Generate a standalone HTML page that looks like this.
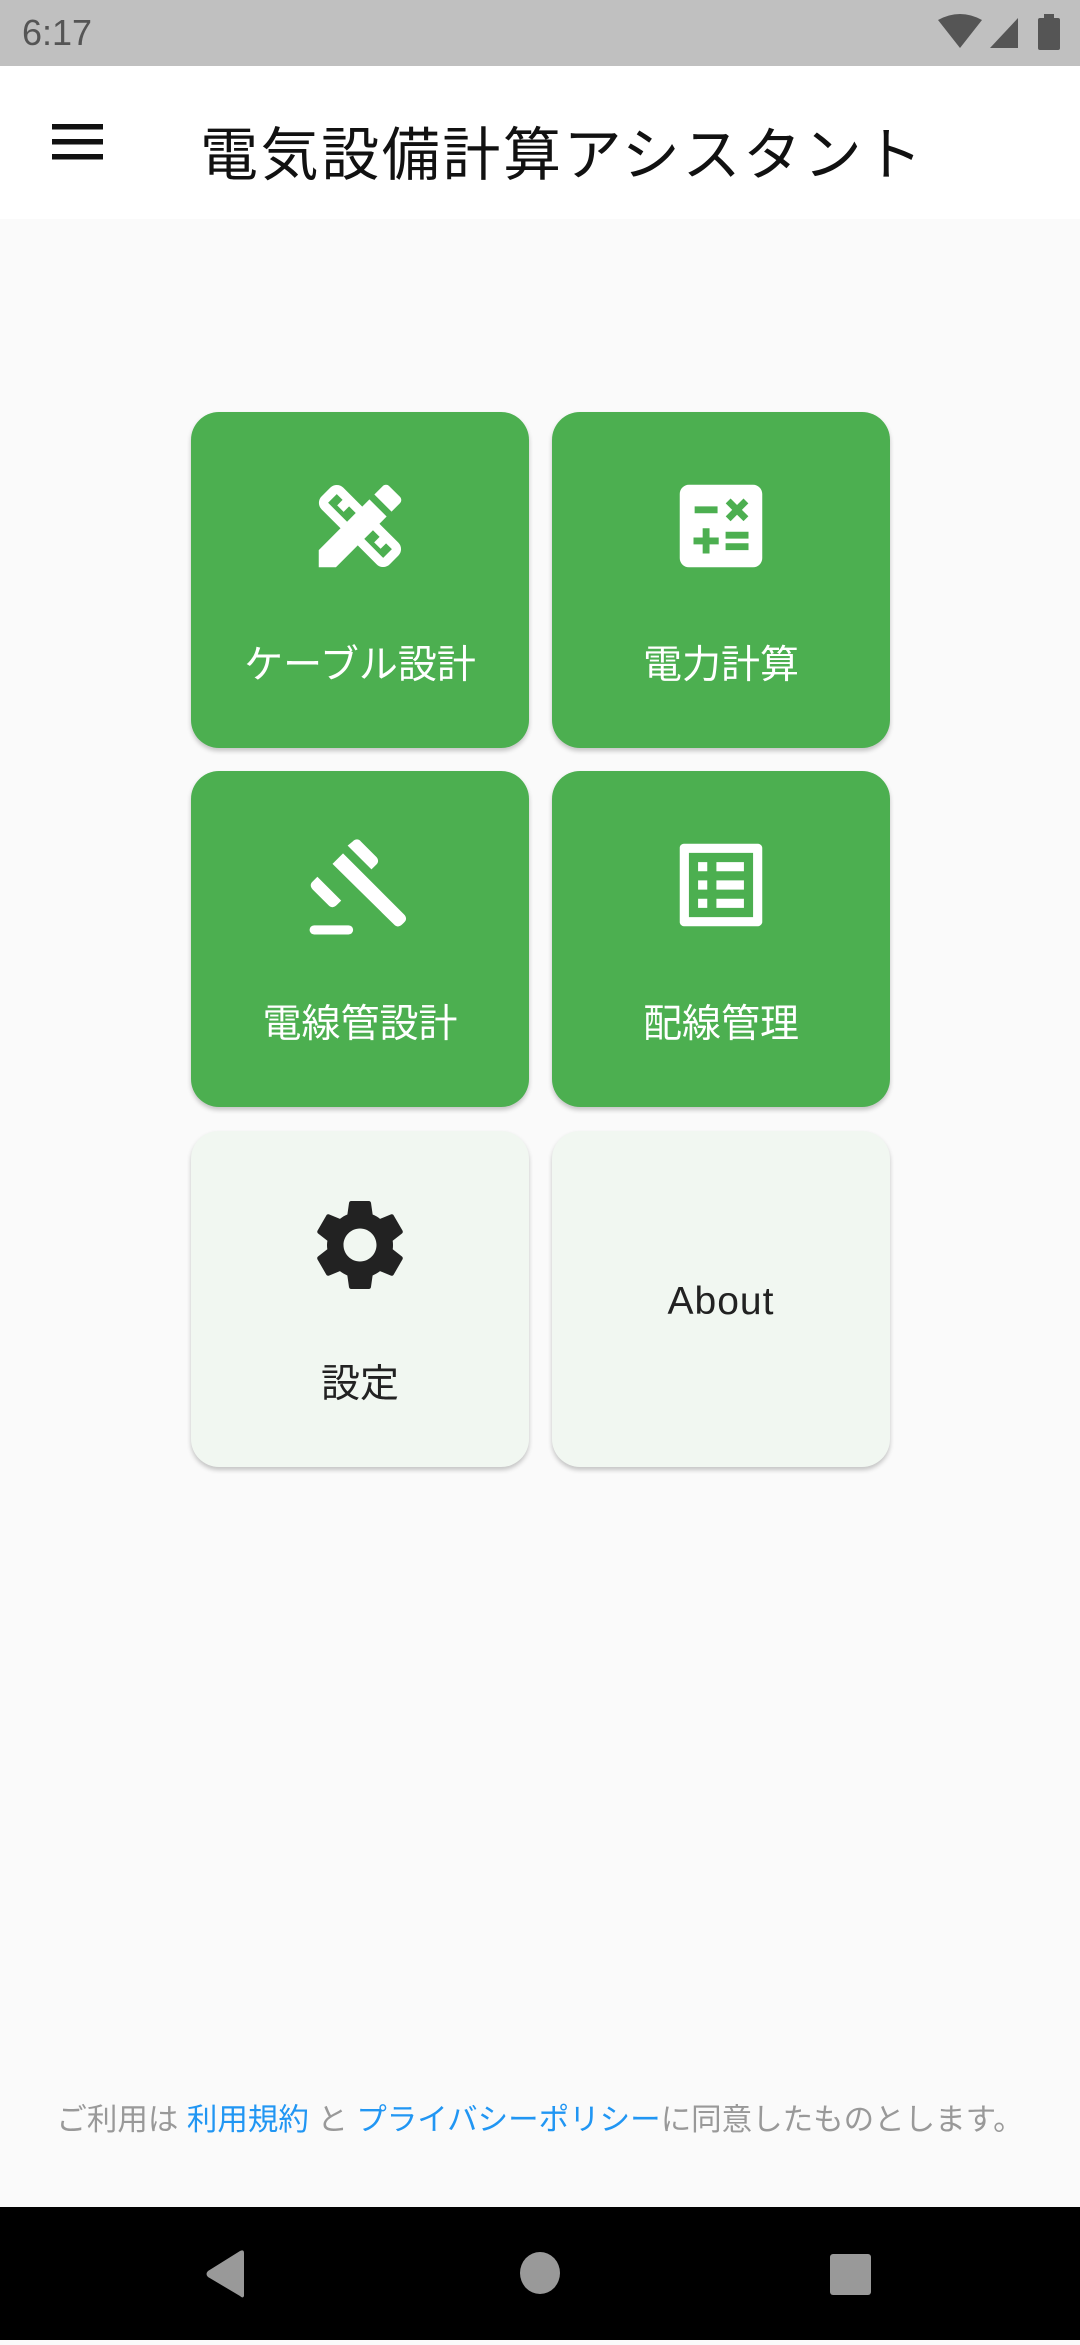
<!DOCTYPE html>
<html><head><meta charset="utf-8"><style>
*{margin:0;padding:0;box-sizing:border-box}
body{width:1080px;height:2340px;background:#fafafa;position:relative;overflow:hidden;font-family:"Liberation Sans","Noto Sans CJK JP",sans-serif}
.status{position:absolute;top:0;left:0;width:1080px;height:66px;background:#c0c0c0}
.status .t{position:absolute;left:22px;top:12px;font-size:36px;color:#555}
.appbar{position:absolute;top:66px;left:0;width:1080px;height:153px;background:#fff}
.title{position:absolute;left:200px;top:42px;font-size:58px;color:#111;letter-spacing:2.6px;white-space:nowrap}
.card{position:absolute;width:338px;height:336px;border-radius:28px;background:#4caf50;box-shadow:0 3px 5px rgba(0,0,0,.22)}
.card.l{background:#f1f7f1}
.card svg{position:absolute;left:114px;top:59px;width:110px;height:110px}
.card .lb{position:absolute;left:0;width:100%;text-align:center;top:229px;font-size:39px;color:#fff;line-height:50px}
.card.l .lb{color:#222}
.foot{position:absolute;top:2095px;left:0;width:1080px;text-align:center;font-size:30.5px;color:#999;white-space:nowrap}
.foot span{color:#2196f3}
.nav{position:absolute;top:2207px;left:0;width:1080px;height:133px;background:#000}
</style></head><body>
<div class="status"><div class="t">6:17</div>
<svg style="position:absolute;left:938px;top:14px" width="124" height="38" viewBox="0 0 124 38">
<path d="M0 6 Q22 -6 44 6 L22 34 Z" fill="#555"/>
<path d="M52 34 L80 4 L80 34 Z" fill="#555"/>
<rect x="100" y="4" width="22" height="32" rx="2" fill="#555"/><rect x="106" y="0" width="10" height="5" fill="#555"/>
</svg></div>
<div class="appbar">
<svg style="position:absolute;left:52px;top:58px" width="51" height="36" viewBox="0 0 51 36"><rect y="0" width="51" height="5.5" fill="#111"/><rect y="15" width="51" height="5.5" fill="#111"/><rect y="30" width="51" height="5.5" fill="#111"/></svg>
<div class="title">電気設備計算アシスタント</div></div>

<div class="card" style="left:191px;top:412px"><svg viewBox="0 0 24 24"><path fill="#fff" d="M16.24 11.51l1.57-1.57-3.75-3.75-1.57 1.57-4.14-4.13c-.78-.78-2.05-.78-2.83 0l-1.9 1.9c-.78.78-.78 2.05 0 2.830l4.13 4.13L3 17.25V21h3.750l4.76-4.76 4.13 4.13c.95.95 2.23.6 2.830 0l1.900-1.9c.78-.78.78-2.05 0-2.83l-4.13-4.13zm-7.06-.44L5.04 6.940l1.89-1.9L8.2 6.31 7.02 7.5l1.41 1.41 1.19-1.19 1.45 1.45-1.89 1.9zm7.88 7.89l-4.13-4.14 1.9-1.9 1.45 1.45-1.19 1.19 1.41 1.41 1.19-1.19 1.27 1.27-1.9 1.91zM20.71 7.04c.39-.39.39-1.020 0-1.41l-2.34-2.34c-.47-.47-1.12-.29-1.41 0l-1.83 1.83 3.75 3.75 1.83-1.83z"/></svg><div class="lb">ケーブル設計</div></div>
<div class="card" style="left:552px;top:412px"><svg viewBox="0 0 24 24"><path fill="#fff" d="M19 3H5c-1.1 0-2 .9-2 2v14c0 1.1.9 2 2 2h14c1.1 0 2-.9 2-2V5c0-1.1-.9-2-2-2zm-5.97 4.06L14.09 6l1.41 1.41L16.91 6l1.06 1.06-1.41 1.41 1.41 1.41-1.06 1.06-1.41-1.4-1.41 1.41-1.06-1.06 1.41-1.41-1.41-1.42zm-6.78.66h5v1.5h-5v-1.5zM11.5 16h-2v2H8v-2H6v-1.5h2v-2h1.5v2h2V16zm6.5 1.25h-5v-1.5h5v1.5zm0-2.5h-5v-1.5h5v1.5z"/></svg><div class="lb">電力計算</div></div>
<div class="card" style="left:552px;top:771px"><svg viewBox="0 0 24 24"><path fill="#fff" d="M19 5v14H5V5h14m1.1-2H3.9c-.5 0-.9.4-.9.9v16.2c0 .4.4.9.9.9h16.2c.4 0 .9-.5.9-.9V3.9c0-.5-.5-.9-.9-.9zM11 7h6v2h-6V7zm0 4h6v2h-6v-2zm0 4h6v2h-6zM7 7h2v2H7zm0 4h2v2H7zm0 4h2v2H7z"/></svg><div class="lb">配線管理</div></div>
<div class="card" style="left:191px;top:771px"><svg viewBox="0 0 24 24"><g fill="#fff"><rect x="1" y="20.8" width="9.5" height="2" rx="1"/><path d="M6 7.4l2.3-2.3 13.3 13.3c.6.6.6 1.3 0 1.8l-.4.4c-.6.6-1.3.6-1.8 0z"/><path d="M10.4 2.5c.6-.6 1.3-.6 1.8 0l3.3 3.3c.6.6.6 1.3 0 1.8l-1 1-5.2-5.2z"/><path d="M1.7 11.2l1-1 5.2 5.2-1 1c-.6.6-1.3.6-1.8 0l-3.4-3.4c-.6-.6-.6-1.3 0-1.8z"/></g></svg><div class="lb">電線管設計</div></div>
<div class="card l" style="left:191px;top:1131px"><svg viewBox="0 0 24 24"><path fill="#222" d="M19.14 12.94c.04-.3.06-.61.06-.94 0-.32-.02-.64-.07-.94l2.03-1.58c.18-.14.23-.41.12-.61l-1.92-3.32c-.12-.22-.37-.29-.59-.22l-2.39.96c-.5-.38-1.03-.7-1.62-.94l-.36-2.54c-.04-.24-.24-.41-.48-.41h-3.84c-.24 0-.43.17-.47.41l-.36 2.54c-.59.24-1.13.57-1.620.94l-2.39-.96c-.22-.08-.47 0-.59.22L2.74 8.87c-.12.21-.08.47.12.61l2.03 1.58c-.05.3-.09.63-.09.94s.02.64.07.94l-2.03 1.58c-.18.14-.23.41-.12.61l1.92 3.32c.12.22.37.29.59.22l2.39-.96c.5.38 1.03.7 1.62.94l.36 2.54c.05.24.24.41.48.41h3.84c.24 0 .44-.17.47-.41l.36-2.54c.59-.24 1.13-.56 1.62-.94l2.39.96c.22.08.47 0 .59-.22l1.92-3.32c.12-.22.07-.47-.12-.61l-2.01-1.58zM12 15.6c-1.98 0-3.6-1.62-3.6-3.6s1.62-3.6 3.6-3.6 3.6 1.62 3.6 3.6-1.62 3.6-3.6 3.6z"/></svg><div class="lb">設定</div></div>
<div class="card l" style="left:552px;top:1131px"><div class="lb" style="top:146px;letter-spacing:1px">About</div></div>

<div class="foot">ご利用は <span>利用規約</span> と <span>プライバシーポリシー</span>に同意したものとします。</div>
<div class="nav"><svg width="1080" height="133" viewBox="0 0 1080 133">
<path d="M244 46 L244 89 Q243 92 240 89 L208 70 Q205 67 208 64 L240 44 Q244 42 244 46Z" fill="#999"/>
<ellipse cx="540" cy="66" rx="20" ry="21" fill="#999"/>
<rect x="830" y="47" width="41" height="41" rx="3" fill="#999"/></svg></div>
</body></html>
